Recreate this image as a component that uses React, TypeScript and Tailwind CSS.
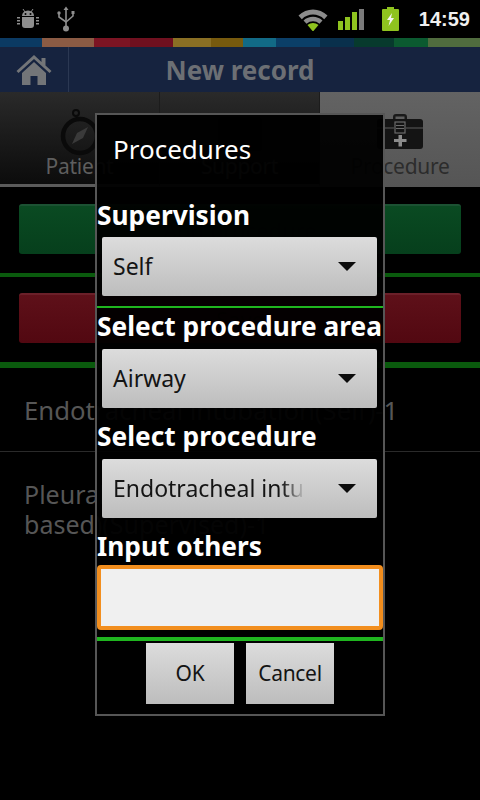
const stripes = [
  { w: 'w-[42px]', c: 'bg-[#0b3a63]' },
  { w: 'w-[52px]', c: 'bg-[#8b5b44]' },
  { w: 'w-[36px]', c: 'bg-[#7c1423]' },
  { w: 'w-[43px]', c: 'bg-[#70101f]' },
  { w: 'w-[38px]', c: 'bg-[#8a6f24]' },
  { w: 'w-[32px]', c: 'bg-[#775a0e]' },
  { w: 'w-[33px]', c: 'bg-[#126a86]' },
  { w: 'w-[44px]', c: 'bg-[#0b3f68]' },
  { w: 'w-[34px]', c: 'bg-[#09304c]' },
  { w: 'w-[40px]', c: 'bg-[#073a2d]' },
  { w: 'w-[34px]', c: 'bg-[#0b5a30]' },
  { w: 'flex-1', c: 'bg-[#506c3e]' },
];

function AndroidIcon() {
  return (
    <svg width="24" height="24" viewBox="0 0 24 24" fill="#8e8e8e">
      <path d="M6 9a6 5.500 0 0 1 12 0z" />
      <path d="M6 10h12v8a3 3 0 0 1-3 3H9a3 3 0 0 1-3-3z" />
      <path d="M7 2l2 3M17 2l-2 3" stroke="#8e8e8e" strokeWidth="1" />
      <path d="M1 10h3v1.500H1zM1 13h3v1.500H1zM1 16h3v1.500H1zM20 10h3v1.500h-3zM20 13h3v1.500h-3zM20 16h3v1.500h-3z" />
      <circle cx="9.500" cy="7" r="1" fill="#000" />
      <circle cx="14.500" cy="7" r="1" fill="#000" />
    </svg>
  );
}

function UsbIcon() {
  return (
    <svg width="18" height="26" viewBox="0 0 18 26" fill="none" stroke="#8e8e8e" strokeWidth="1.600">
      <path d="M9 3v18" />
      <path d="M9 0.500l2.500 3.500h-5z" fill="#8e8e8e" stroke="none" />
      <path d="M2 8v3l7 5 7-6V8" />
      <circle cx="2" cy="7" r="1.700" fill="#8e8e8e" stroke="none" />
      <rect x="14.500" y="5" width="3" height="3" fill="#8e8e8e" stroke="none" />
      <circle cx="9" cy="22.500" r="3" fill="#8e8e8e" stroke="none" />
    </svg>
  );
}

function WifiIcon() {
  return (
    <svg width="30" height="24" viewBox="0 0 30 24">
      <path d="M0.500 8.500C8.500 0.500 21.500 0.500 29.500 8.500l-3.300 3.700C20 6 10 6 3.800 12.200z" fill="#8c8c8c" />
      <path d="M5.500 13.500c5.500-5 13.500-5 19 0l-3 3.300c-4-3.300-9-3.300-13 0z" fill="#8c8c8c" />
      <path d="M9.500 18c3.200-2.800 7.800-2.800 11 0L15 24.500z" fill="#8fc31f" />
    </svg>
  );
}

function SignalIcon() {
  return (
    <div className="flex items-end gap-[2px] h-[22px]">
      <div className="w-[5px] h-[9px] bg-[#8fc31f]" />
      <div className="w-[5px] h-[13px] bg-[#8fc31f]" />
      <div className="w-[5px] h-[18px] bg-[#8fc31f]" />
      <div className="w-[5px] h-[21px] bg-[#7a7a7a]" />
    </div>
  );
}

function BatteryIcon() {
  return (
    <svg width="17" height="24" viewBox="0 0 17 24">
      <path d="M5 0h7v2h4a1 1 0 0 1 1 1v20a1 1 0 0 1-1 1H1a1 1 0 0 1-1-1V3a1 1 0 0 1 1-1h4z" fill="#8fc31f" />
      <path d="M10 6l-5 7h3l-1.500 6 5.500-8H9z" fill="#f4f4f4" />
    </svg>
  );
}

function HomeIcon() {
  return (
    <svg width="36" height="32" viewBox="0 0 36 32" fill="#737578">
      <path d="M18 1L0.500 17l2 2L18 5l15.500 14 2-2-6-5.500V4h-4v4z" />
      <path d="M6 19L18 8l12 11v12H21.500V22h-7v9H6z" />
    </svg>
  );
}

function StopwatchIcon() {
  return (
    <svg width="44" height="50" viewBox="0 0 44 50" fill="none">
      <circle cx="18" cy="4" r="3" stroke="#0a0a0a" strokeWidth="2" />
      <circle cx="22" cy="27" r="17" stroke="#0a0a0a" strokeWidth="4.500" />
      <path d="M14 35l5-11 11-6-5 11z" fill="#3a3a3a" />
    </svg>
  );
}

function CaseIcon() {
  return (
    <svg width="46" height="42" viewBox="0 0 46 42">
      <path d="M16 11V8a3 3 0 0 1 3-3h8a3 3 0 0 1 3 3v3h-2.500V7.500h-9V11z" fill="#1a1a1a" />
      <rect x="0" y="10" width="46" height="30" rx="3" fill="#141414" />
      <path d="M0 19h17M29 19h17" stroke="#5c5c5c" strokeWidth="1" />
      <rect x="18" y="13" width="10" height="11" fill="none" stroke="#6a6a6a" strokeWidth="1.200" />
      <path d="M19 16.500h8M19 19.500h8" stroke="#6a6a6a" strokeWidth="1.200" />
      <path d="M21.500 26h3.500v4h4.500v3H25v4.500h-3.500V33H17v-3h4.500z" fill="#8c8c8c" />
    </svg>
  );
}

function Tab({ label, selected, icon }: { label: string; selected?: boolean; icon: React.ReactNode }) {
  return (
    <div
      className={
        selected
          ? 'w-[160px] h-[95px] bg-gradient-to-b from-[#636363] to-[#555555] flex flex-col items-center pt-[17px]'
          : 'w-[160px] h-[95px] bg-gradient-to-b from-[#2a2a2a] to-[#0c0c0c] border-b-[3px] border-[#5b5b5b] border-r border-r-[#1c1c1c] flex flex-col items-center pt-[17px]'
      }
    >
      <div className="h-[42px] flex items-start justify-center">{icon}</div>
      <span className={selected ? 'text-[21px] tracking-[-0.3px] leading-[30px] text-[#2c2c2c]' : 'text-[21px] tracking-[-0.3px] leading-[30px] text-[#5e5e5e]'}>
        {label}
      </span>
    </div>
  );
}

function Spinner({ value, clipped }: { value: string; clipped?: boolean }) {
  return (
    <div className="ml-[5px] w-[275px] h-[59px] rounded-[2px] bg-gradient-to-b from-[#dcdcdc] to-[#bdbdbd] flex items-center pl-[11px] pr-[21px] justify-between">
      <span
        className={
          clipped
            ? 'w-[192px] overflow-hidden whitespace-nowrap text-[23px] text-[#141414] [mask-image:linear-gradient(to_right,black_88%,transparent)]'
            : 'text-[23px] text-[#141414]'
        }
      >
        {value}
      </span>
      <svg width="18" height="9" viewBox="0 0 18 9">
        <path d="M0 0h18L9 9z" fill="#0c0c0c" />
      </svg>
    </div>
  );
}

function FieldLabel({ text, h }: { text: string; h: string }) {
  return <div className={`${h} flex items-end text-[26.3px] leading-[34px] font-bold text-white`}>{text}</div>;
}

export default function App() {
  return (
    <div className="relative w-[480px] h-[800px] overflow-hidden bg-black font-['Noto_Sans','Open_Sans',sans-serif]">
      {/* Status bar */}
      <div className="h-[38px] flex items-center pl-[16px] pr-[10px]">
        <AndroidIcon />
        <div className="ml-[17px]">
          <UsbIcon />
        </div>
        <div className="ml-auto flex items-center">
          <WifiIcon />
          <div className="ml-[10px]">
            <SignalIcon />
          </div>
          <div className="ml-[18px]">
            <BatteryIcon />
          </div>
          <span className="ml-[20px] text-[20px] font-bold text-[#f0f0f0] font-['Liberation_Sans',sans-serif]">14:59</span>
        </div>
      </div>

      {/* Colour stripe */}
      <div className="h-[9px] flex">
        {stripes.map((s, i) => (
          <div key={i} className={`${s.w} ${s.c}`} />
        ))}
      </div>

      {/* Action bar */}
      <div className="relative h-[45px] bg-[#16233f] flex items-center">
        <div className="w-[69px] h-full border-r border-[#2b3853] flex items-center justify-center">
          <HomeIcon />
        </div>
        <span className="absolute left-0 right-0 top-[4px] text-center text-[26px] font-bold text-[#6c6f74]">New record</span>
      </div>

      {/* Tabs */}
      <div className="flex">
        <Tab label="Patient" icon={<StopwatchIcon />} />
        <Tab label="Support" icon={<div className="mt-[8px] w-[44px] h-[34px] bg-[#0d0d0d] rounded-[3px]" />} />
        <Tab label="Procedure" selected icon={<CaseIcon />} />
      </div>

      {/* Page behind the dialog */}
      <div className="px-[19px] pt-[17px]">
        <div className="h-[50px] rounded-[3px] border-t-2 border-[#1c5233] bg-gradient-to-b from-[#0a4a22] to-[#063f1c] flex items-center justify-center text-[22px] text-[#0e3018]">
          Add procedure
        </div>
      </div>
      <div className="mt-[19px] h-[4px] bg-[#0a5a0d]" />
      <div className="px-[19px] pt-[16px]">
        <div className="h-[50px] rounded-[3px] border-t-2 border-[#6b2029] bg-gradient-to-b from-[#5e1019] to-[#520811] flex items-center justify-center text-[22px] text-[#33080e]">
          Save
        </div>
      </div>
      <div className="mt-[19px] h-[6px] bg-[#0a5a0d]" />
      <div className="h-[84px] border-b border-[#2a2a2a] pl-[24px] pt-[3px] flex items-center text-[25.7px] text-[#565656]">
        Endotracheal intubation(Self)-1
      </div>
      <div className="pl-[24px] pt-[27px] text-[25px] leading-[30px] text-[#565656]">
        <div>Pleural tap (US</div>
        <div>based)(Supervised)-1</div>
      </div>

      {/* Dialog */}
      <div className="absolute left-[95px] top-[113px] w-[290px] h-[603px] border-2 border-[#565656] bg-black/95">
        <div className="h-[68px] pl-[16px] flex items-center text-[26px] text-white">Procedures</div>
        <div className="pb-[5px]">
          <FieldLabel text="Supervision" h="h-[49px]" />
        </div>
        <Spinner value="Self" />
        <div className="mt-[10px] h-[2px] bg-[#1fb51f]" />
        <FieldLabel text="Select procedure area" h="h-[35px]" />
        <div className="mt-[6px]">
          <Spinner value="Airway" />
        </div>
        <FieldLabel text="Select procedure" h="h-[45px]" />
        <div className="mt-[6px]">
          <Spinner value="Endotracheal intubation" clipped />
        </div>
        <FieldLabel text="Input others" h="h-[45px]" />
        <div className="mt-[2px] h-[65px] rounded-[4px] border-[4px] border-[#f28e1e] bg-[#f0f0f0]" />
        <div className="mt-[7px] h-[4px] bg-[#1fb51f]" />
        <div className="mt-[2px] flex justify-center gap-[12px]">
          <button className="w-[88px] h-[61px] bg-gradient-to-b from-[#dcdcdc] to-[#bdbdbd] text-[21px] tracking-[-0.3px] text-[#141414]">OK</button>
          <button className="w-[88px] h-[61px] bg-gradient-to-b from-[#dcdcdc] to-[#bdbdbd] text-[21px] tracking-[-0.3px] text-[#141414]">Cancel</button>
        </div>
      </div>
    </div>
  );
}
